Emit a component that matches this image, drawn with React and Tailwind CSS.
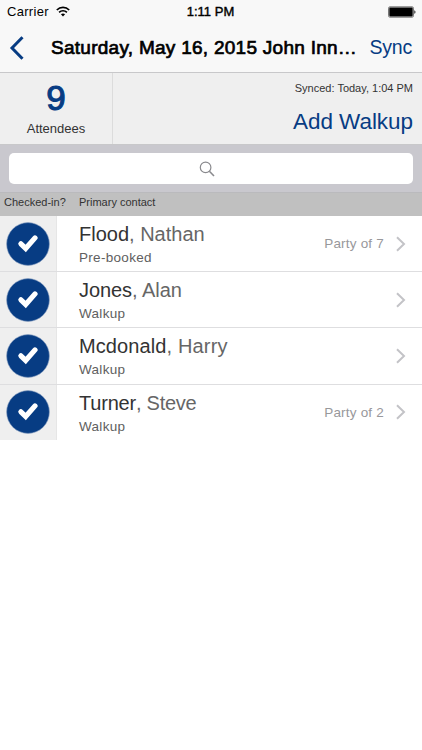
import React from "react";

const attendees = [
  { id: 1, last: "Flood", first: "Nathan", type: "Pre-booked", party: 7, lastStyle: "tracking-[0px]", firstStyle: "tracking-[0px]" },
  { id: 2, last: "Jones", first: "Alan", type: "Walkup", lastStyle: "tracking-[-0.1px]", firstStyle: "tracking-[0px]" },
  { id: 3, last: "Mcdonald", first: "Harry", type: "Walkup", lastStyle: "tracking-[0.1px]", firstStyle: "tracking-[0.15px]" },
  { id: 4, last: "Turner", first: "Steve", type: "Walkup", party: 2, lastStyle: "tracking-[-0.2px]", firstStyle: "tracking-[-0.25px]" },
];

function StatusBar() {
  return (
    <div className="flex h-[23px] items-center justify-between pl-[7px] pr-[6px] text-black">
      <div className="flex w-32 items-center gap-[7px]">
        <span className="text-[13px] tracking-[0.3px]">Carrier</span>
        <svg width="14" height="11" viewBox="0 0 14 11" fill="none" stroke="currentColor" strokeWidth="1.7">
          <path d="M0.8 4C4.3 0.5 9.7 0.5 13.2 4" />
          <path d="M3.1 6.4C5.3 4.2 8.7 4.2 10.9 6.4" />
          <path d="M7 10.4L4.9 8.2C6.1 7.1 7.9 7.1 9.1 8.2Z" fill="currentColor" stroke="none" />
        </svg>
      </div>
      <span className="pr-[2px] text-[13px] [-webkit-text-stroke:0.4px_#000]">1:11 PM</span>
      <div className="flex w-32 justify-end">
        <svg width="28" height="12" viewBox="0 0 28 12">
          <rect x="0.5" y="0.8" width="25" height="10.4" rx="1.5" fill="#f7f7f7" stroke="#555" strokeWidth="0.8" />
          <rect x="1.3" y="1.6" width="23.4" height="8.8" rx="0.8" fill="#000" />
          <path d="M26.3 4.2C27.9 4.6 27.9 7.4 26.3 7.8Z" fill="#222" />
        </svg>
      </div>
    </div>
  );
}

function NavBar() {
  return (
    <div className="flex h-[49px] items-center pl-[9px] pr-[10px]">
      <svg className="shrink-0" width="16" height="24" viewBox="0 0 16 24" fill="none" stroke="#073c83" strokeWidth="3">
        <path d="M13.5 1.2L3 12L13.5 22.8" />
      </svg>
      <h1 className="ml-[26px] w-[310px] whitespace-nowrap pt-px text-[19px] tracking-[0.27px] text-black [-webkit-text-stroke:0.7px_#000]">
        Saturday, May 16, 2015 John Inn…
      </h1>
      <button className="ml-auto pt-px text-[19.5px] tracking-[-0.2px] text-[#073c83]">Sync</button>
    </div>
  );
}

function Summary() {
  return (
    <div className="flex h-[73px] border-y border-[#c8c8ca] bg-[#efefef]">
      <div className="flex w-[113px] flex-col items-center border-r border-[#dcdcdc] pt-[7px]">
        <span className="text-[35px] leading-[36px] text-[#073c83] [-webkit-text-stroke:1.1px_#073c83]">9</span>
        <span className="mt-[5px] text-[13px] leading-4 text-[#333]">Attendees</span>
      </div>
      <div className="flex flex-1 flex-col items-end pr-[9px] pt-[7px]">
        <span className="text-[11px] leading-4 text-[#333]">Synced: Today, 1:04 PM</span>
        <button className="mt-3 text-[22.5px] leading-7 tracking-[-0.05px] text-[#073c83]">Add Walkup</button>
      </div>
    </div>
  );
}

function SearchBar() {
  return (
    <div className="h-12 border-b border-[#bababd] bg-[#c9c8ce] px-[9px] pt-2">
      <div className="flex h-[31px] items-center justify-center rounded-[5px] bg-white pr-2">
        <svg width="16" height="16" viewBox="0 0 16 16" fill="none" stroke="#8a8a8e" strokeWidth="1.2">
          <circle cx="6.6" cy="6.4" r="5.3" />
          <path d="M10.4 10.3L15 15" strokeWidth="1.6" />
        </svg>
      </div>
    </div>
  );
}

function AttendeeRow({ attendee }) {
  return (
    <li className="flex h-[56.2px] border-b border-[#dedee0] last:h-[55.4px] last:border-b-0">
      <div className="flex w-[57px] shrink-0 items-center border-r border-[#e6e6e6] bg-[#efefef] pl-[6px]">
        <svg width="44" height="44" viewBox="0 0 44 44">
          <circle cx="22" cy="22" r="21.4" fill="#073c83" stroke="#8fa5c5" strokeWidth="0.6" />
          <path d="M14.9 21.8L19.7 26.4L29 15.9" fill="none" stroke="#fff" strokeWidth="5.2" strokeLinecap="round" strokeLinejoin="miter" />
        </svg>
      </div>
      <div className="flex flex-1 flex-col pl-[22px] pt-[5px]">
        <span className="text-[20px] leading-[26px] text-[#666]">
          <span className={`text-[#333] ${attendee.lastStyle}`}>{attendee.last}</span>
          <span className={attendee.firstStyle}>, {attendee.first}</span>
        </span>
        <span className="mt-[3px] text-[13.5px] leading-4 tracking-[0.3px] text-[#606060]">{attendee.type}</span>
      </div>
      <div className="flex items-center gap-3 pr-[16px]">
        {attendee.party && (
          <span className="pt-[2px] text-[13.5px] tracking-[0.2px] text-[#98989b]">Party of {attendee.party}</span>
        )}
        <svg width="10" height="16" viewBox="0 0 10 16" fill="none" stroke="#c3c3c7" strokeWidth="2">
          <path d="M1 1.2L8 8L1 14.8" />
        </svg>
      </div>
    </li>
  );
}

export default function App() {
  return (
    <div className="min-h-[750px] w-full bg-white font-['Liberation_Sans',Arial,sans-serif]">
      <header className="bg-[#f8f8f8]">
        <StatusBar />
        <NavBar />
      </header>
      <Summary />
      <SearchBar />
      <div className="flex h-[23px] bg-[#c0c0c0] pt-px text-[11px] leading-[16px] text-[#333]">
        <span className="w-[79px] pl-1">Checked-in?</span>
        <span>Primary contact</span>
      </div>
      <ul>
        {attendees.map((a) => (
          <AttendeeRow key={a.id} attendee={a} />
        ))}
      </ul>
    </div>
  );
}
